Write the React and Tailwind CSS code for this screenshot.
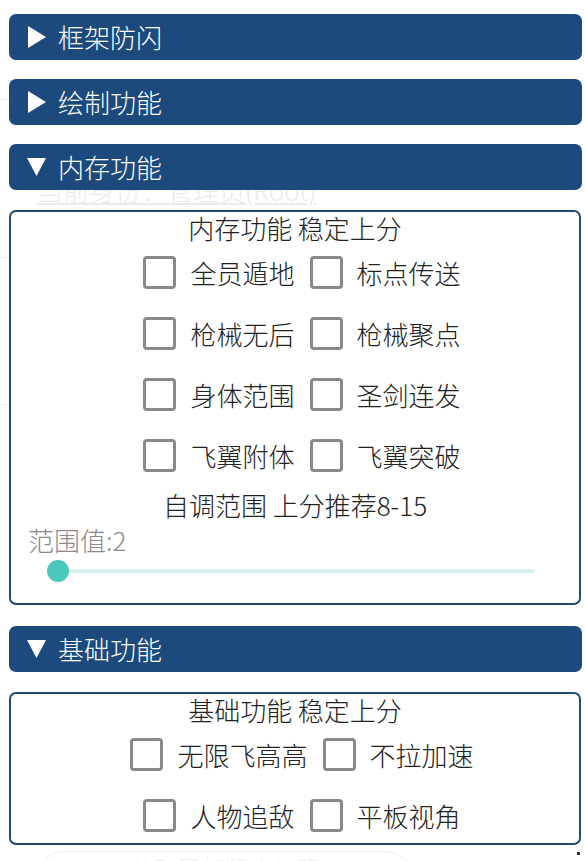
import React, { useState } from 'react';

const font = { fontFamily: '"Noto Sans CJK SC", "Noto Sans", sans-serif' };

function Header({ title, open }) {
  return (
    <div className="h-[46px] w-[573px] rounded-[7px] bg-[#1c4a7c] text-white flex items-center pl-[18px]">
      <svg width="20" height="24" viewBox="0 0 20 24" className="shrink-0">
        {open ? (
          <polygon points="0,3 19,3 9.5,21" fill="#fff" />
        ) : (
          <polygon points="1,1 19,12 1,23" fill="#fff" />
        )}
      </svg>
      <span className="ml-[11px] text-[26px] leading-none font-light">{title}</span>
    </div>
  );
}

function Check({ label, checked, onToggle }) {
  return (
    <div className="flex items-center cursor-pointer" onClick={onToggle}>
      <span className="w-[33px] h-[33px] rounded-[4px] border-[3px] border-[#898989] bg-white flex items-center justify-center">
        {checked && <span className="w-[15px] h-[15px] bg-[#1c4a7c] rounded-[2px]" />}
      </span>
      <span className="ml-[14px] text-[26px] leading-none text-[#222] font-light">{label}</span>
    </div>
  );
}

function Row({ items, state, toggle }) {
  return (
    <div className="h-[61px] flex items-center justify-center pl-[14px] gap-[15px]">
      {items.map((it) => (
        <Check key={it} label={it} checked={!!state[it]} onToggle={() => toggle(it)} />
      ))}
    </div>
  );
}

export default function App() {
  const [checks, setChecks] = useState({});
  const [range] = useState(2);
  const toggle = (k) => setChecks((p) => ({ ...p, [k]: !p[k] }));

  return (
    <div className="relative w-[585px] h-[861px] bg-white overflow-hidden" style={font}>
      {/* faint page behind the menu */}
      <div className="absolute left-0 top-[99px] w-[30px] h-px bg-[#efefef]" />
      <div className="absolute left-0 top-[257px] w-[12px] h-px bg-[#efefef]" />
      <div className="absolute left-0 top-[404px] w-[12px] h-px bg-[#efefef]" />
      <div className="absolute left-[37px] top-[177px] text-[26px] leading-none text-[#ebebeb] font-light underline">当前身份：管理员(Root)</div>
      <div className="absolute left-[35px] top-[851px] w-[380px] h-[60px] rounded-full border border-[#ededed] flex justify-center pt-[5px]">
        <span className="text-[24px] leading-none text-[#ededed] font-light">获取最新版本权限</span>
      </div>
      <div className="absolute left-[577px] top-[852px] w-[3px] h-[3px] bg-[#333]" />

      <div className="relative flex flex-col pl-[9px] pt-[14px]">
        <Header title="框架防闪" />
        <div className="h-[19px]" />
        <Header title="绘制功能" />
        <div className="h-[19px]" />
        <Header title="内存功能" open />
        <div className="h-[20px]" />

        <div className="w-[572px] rounded-[7px] border-2 border-[#234a73] bg-white pb-[17px] font-light">
          <div className="h-[30px] flex items-center justify-center text-[26px] text-[#222]">内存功能 稳定上分</div>
          <Row items={['全员遁地', '标点传送']} state={checks} toggle={toggle} />
          <Row items={['枪械无后', '枪械聚点']} state={checks} toggle={toggle} />
          <Row items={['身体范围', '圣剑连发']} state={checks} toggle={toggle} />
          <Row items={['飞翼附体', '飞翼突破']} state={checks} toggle={toggle} />
          <div className="h-[36px] flex items-center justify-center text-[26px] text-[#222]">自调范围 上分推荐8-15</div>
          <div className="h-[34px] flex items-center pl-[17px] text-[26px] text-[#8a8a8a]">范围值:{range}</div>
          <div className="h-[30px] flex items-center pl-[36px]">
            <div className="relative w-[488px] h-[4px] bg-[#d6f1ee] rounded-full">
              <div className="absolute left-0 top-[-9px] w-[22px] h-[22px] rounded-full bg-[#49c8bb]" />
            </div>
          </div>
        </div>

        <div className="h-[21px]" />
        <Header title="基础功能" open />
        <div className="h-[20px]" />

        <div className="w-[572px] h-[153px] overflow-hidden rounded-[7px] border-2 border-[#234a73] bg-white font-light">
          <div className="h-[30px] flex items-center justify-center text-[26px] text-[#222]">基础功能 稳定上分</div>
          <Row items={['无限飞高高', '不拉加速']} state={checks} toggle={toggle} />
          <Row items={['人物追敌', '平板视角']} state={checks} toggle={toggle} />
        </div>
      </div>
    </div>
  );
}
